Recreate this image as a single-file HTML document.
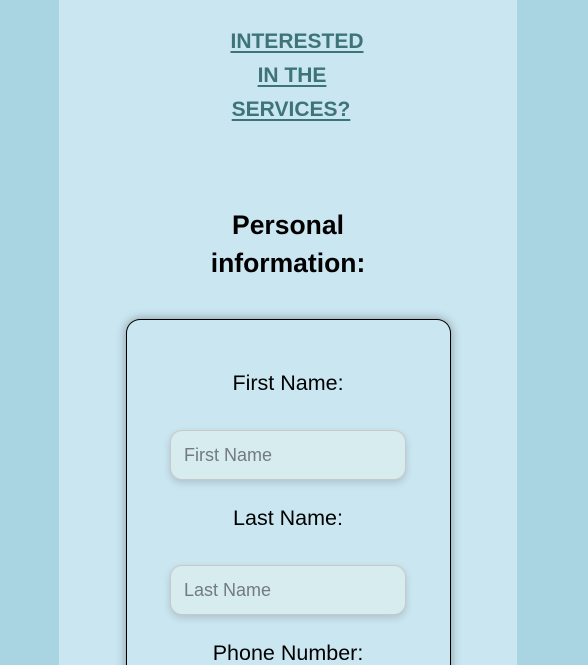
<!DOCTYPE html>
<html><head><meta charset="utf-8"><style>
html,body{margin:0;padding:0;width:588px;height:665px;overflow:hidden;background:#a9d4e2;font-family:"Liberation Sans",sans-serif;}
.wrap{position:relative;width:588px;height:665px;overflow:hidden;}
.panel{position:absolute;left:59px;top:0;width:458px;height:665px;background:#cae6f1;}
.t{position:absolute;width:588px;text-align:center;left:0;}
.h{color:#3d7478;font-weight:bold;font-size:21px;text-decoration:underline;text-decoration-thickness:2px;text-underline-offset:3px;}
.p{font-weight:bold;font-size:26.5px;color:#000;left:-6px;}
.card{position:absolute;left:126px;top:319px;width:323px;height:360px;border:1px solid #000;border-bottom:none;border-radius:14px 14px 0 0;background:#cae6f1;box-shadow:0 0 10px rgba(0,0,0,0.35);}
.lbl{font-size:21.5px;color:#000;left:-6px;}
.in{position:absolute;left:170px;width:236px;height:50px;border:1px solid #c9c9c9;border-radius:12px;background:#d7ecee;box-shadow:0 3px 8px rgba(0,0,0,0.15);box-sizing:border-box;padding-left:13px;line-height:48px;font-size:18px;color:#737b80;}
</style></head><body><div class="wrap">
<div class="panel"></div>
<div class="t h" style="top:30px;left:3px">INTERESTED</div>
<div class="t h" style="top:64px;left:-2px">IN THE</div>
<div class="t h" style="top:98px;left:-3px">SERVICES?</div>
<div class="t p" style="top:210px">Personal</div>
<div class="t p" style="top:248px">information:</div>
<div class="card"></div>
<div class="t lbl" style="top:371px">First Name:</div>
<div class="in" style="top:430px">First Name</div>
<div class="t lbl" style="top:506px">Last Name:</div>
<div class="in" style="top:565px">Last Name</div>
<div class="t lbl" style="top:641px">Phone Number:</div>
</div></body></html>
